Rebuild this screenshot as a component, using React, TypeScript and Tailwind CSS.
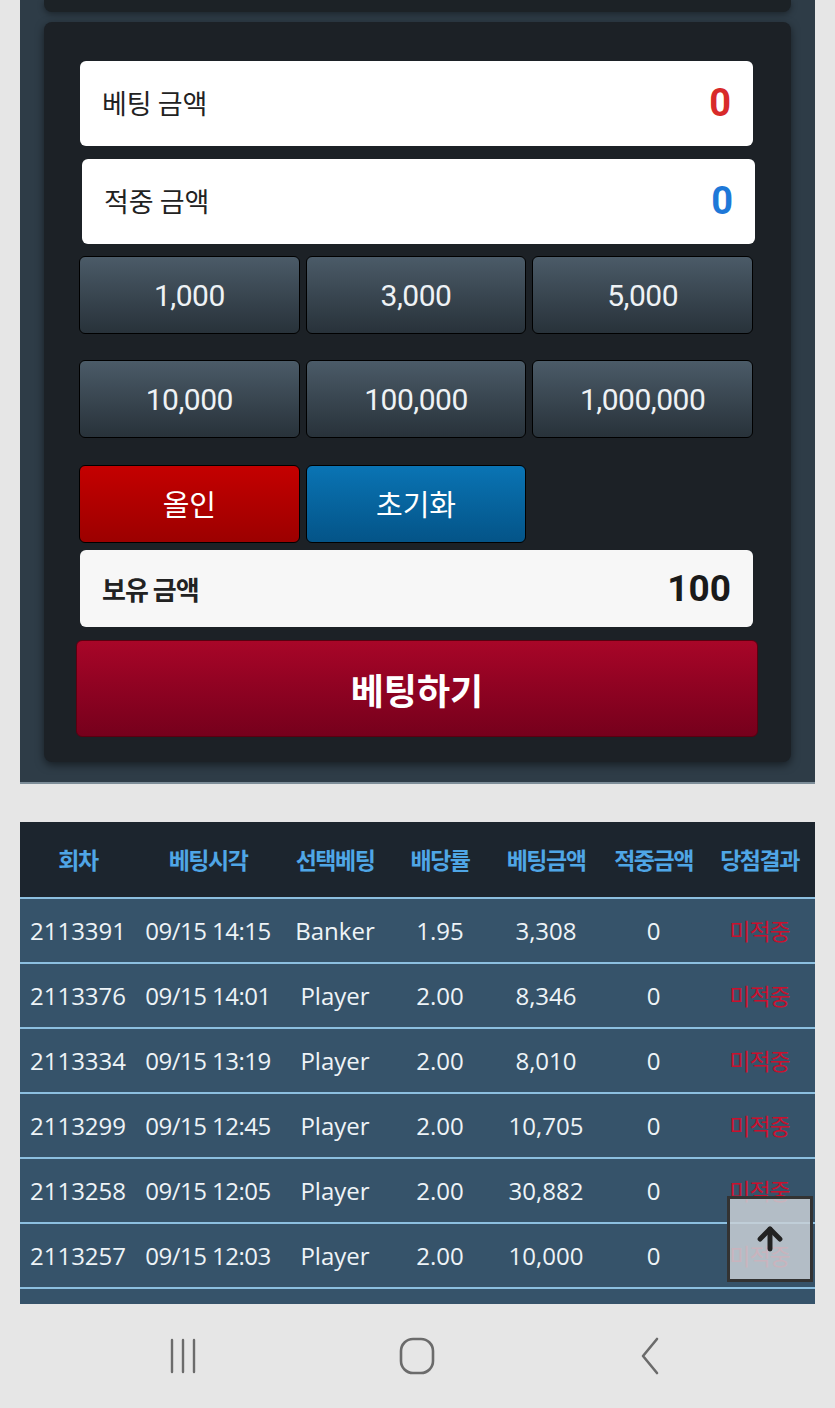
import React from 'react';
import { ArrowUp } from 'lucide-react';

const chips = ['1,000', '3,000', '5,000', '10,000', '100,000', '1,000,000'];

const rows = [
  ['2113391', '09/15 14:15', 'Banker', '1.95', '3,308', '0'],
  ['2113376', '09/15 14:01', 'Player', '2.00', '8,346', '0'],
  ['2113334', '09/15 13:19', 'Player', '2.00', '8,010', '0'],
  ['2113299', '09/15 12:45', 'Player', '2.00', '10,705', '0'],
  ['2113258', '09/15 12:05', 'Player', '2.00', '30,882', '0'],
  ['2113257', '09/15 12:03', 'Player', '2.00', '10,000', '0'],
];

const headers = ['회차', '베팅시각', '선택베팅', '배당률', '베팅금액', '적중금액', '당첨결과'];
const cols = 'grid grid-cols-[116px_144px_110px_100px_112px_103px_109px]';

const kr = { fontFamily: '"Noto Sans CJK KR", "Noto Sans", sans-serif' };
const num = { fontFamily: 'Roboto, "Noto Sans CJK KR", sans-serif' };
const body = { fontFamily: '"Open Sans", "Noto Sans CJK KR", sans-serif' };

const ChipButton: React.FC<{ label: string }> = ({ label }) => (
  <button
    className="h-[78px] rounded-md border border-black bg-gradient-to-b from-[#4b5b68] to-[#28323a] text-[30px] text-[#eef2f5] tracking-[-0.5px] flex items-center justify-center"
    style={num}
  >
    {label}
  </button>
);

export default function App() {
  return (
    <div className="w-[835px] h-[1408px] bg-[#e6e6e6] overflow-hidden relative">
      {/* betting panel */}
      <div className="mx-[20px] h-[784px] bg-[#2e3c47] border-b-2 border-[#7d8d98] px-[24px] flex flex-col">
        <div className="h-[12px] bg-[#1c2226] rounded-b-lg shadow-[0_2px_6px_rgba(0,0,0,0.4)]" />
        <div className="mt-[10px] h-[740px] bg-[#1c2126] rounded-lg shadow-[0_3px_8px_rgba(0,0,0,0.5)] pl-[36px] pr-[38px] pt-[39px] flex flex-col">
          <div className="h-[85px] bg-white rounded-md flex items-center justify-between pl-[22px] pr-[22px]">
            <span className="text-[27px] text-[#222]" style={kr}>베팅 금액</span>
            <span className="text-[38px] font-bold text-[#d82a2a]" style={num}>0</span>
          </div>
          <div className="mt-[13px] ml-[2px] -mr-[2px] h-[85px] bg-white rounded-md flex items-center justify-between pl-[22px] pr-[22px]">
            <span className="text-[27px] text-[#222]" style={kr}>적중 금액</span>
            <span className="text-[38px] font-bold text-[#1e78d8]" style={num}>0</span>
          </div>
          <div className="mt-[12px] -ml-px grid grid-cols-3 gap-x-[6px] gap-y-[26px]">
            {chips.map((c) => (
              <ChipButton key={c} label={c} />
            ))}
          </div>
          <div className="mt-[27px] -ml-px grid grid-cols-3 gap-x-[6px]">
            <button
              className="h-[78px] rounded-md border border-black bg-gradient-to-b from-[#c40000] to-[#9c0000] text-[29px] text-white"
              style={kr}
            >
              올인
            </button>
            <button
              className="h-[78px] rounded-md border border-black bg-gradient-to-b from-[#0a74b4] to-[#045488] text-[29px] text-white"
              style={kr}
            >
              초기화
            </button>
          </div>
          <div className="mt-[7px] h-[77px] bg-[#f7f7f7] rounded-md flex items-center justify-between pl-[22px] pr-[22px]">
            <span className="text-[26px] font-bold text-[#222] tracking-[-1px]" style={kr}>보유 금액</span>
            <span className="text-[37px] font-bold text-[#1a1a1a]" style={num}>100</span>
          </div>
          <button
            className="mt-[13px] -ml-[4px] -mr-[5px] h-[97px] rounded-md border border-[#5a0010] bg-gradient-to-b from-[#a80628] to-[#76001c] text-[36px] font-bold text-white"
            style={kr}
          >
            베팅하기
          </button>
        </div>
      </div>

      {/* history table */}
      <div className="mx-[20px] mt-[38px] h-[482px] overflow-hidden bg-[#36536a]">
        <div className={`${cols} h-[77px] bg-[#1c252e] items-center border-b-2 border-[#8cbfe0]`}>
          {headers.map((h) => (
            <div key={h} className="text-center text-[23px] font-bold text-[#4fa6e6] tracking-[-1.5px] whitespace-nowrap" style={kr}>
              {h}
            </div>
          ))}
        </div>
        {rows.map((r) => (
          <div key={r[0]} className={`${cols} h-[65px] items-center border-b-2 border-[#8cbfe0] text-[24px] text-[#eef3f7]`} style={body}>
            {r.map((v, i) => (
              <div key={i} className={i === 1 ? 'text-center whitespace-nowrap tracking-[-0.5px]' : 'text-center whitespace-nowrap'}>
                {v}
              </div>
            ))}
            <div className="text-center text-[23px] text-[#c8102e] tracking-[-1px]" style={kr}>미적중</div>
          </div>
        ))}
      </div>

      {/* scroll to top */}
      <button className="absolute left-[727px] top-[1196px] w-[86px] h-[86px] border-[3px] border-[#333] bg-[#c9d0d6]/85 flex items-center justify-center">
        <ArrowUp size={34} strokeWidth={3.5} color="#222" />
      </button>

      {/* android nav bar */}
      <div className="h-[104px] flex items-center justify-center gap-[194px] pr-[2px]">
        <svg width="40" height="40" viewBox="0 0 40 40" fill="none" stroke="#6b6b6b" strokeWidth="2.4" strokeLinecap="round">
          <line x1="9" y1="4" x2="9" y2="36" />
          <line x1="20" y1="4" x2="20" y2="36" />
          <line x1="31" y1="4" x2="31" y2="36" />
        </svg>
        <svg width="40" height="40" viewBox="0 0 40 40" fill="none" stroke="#6b6b6b" strokeWidth="2.6">
          <rect x="4" y="3" width="32" height="34" rx="12" />
        </svg>
        <svg width="40" height="40" viewBox="0 0 40 40" fill="none" stroke="#6b6b6b" strokeWidth="2.6" strokeLinecap="round" strokeLinejoin="round">
          <polyline points="26,3 12,20 26,37" />
        </svg>
      </div>
    </div>
  );
}
